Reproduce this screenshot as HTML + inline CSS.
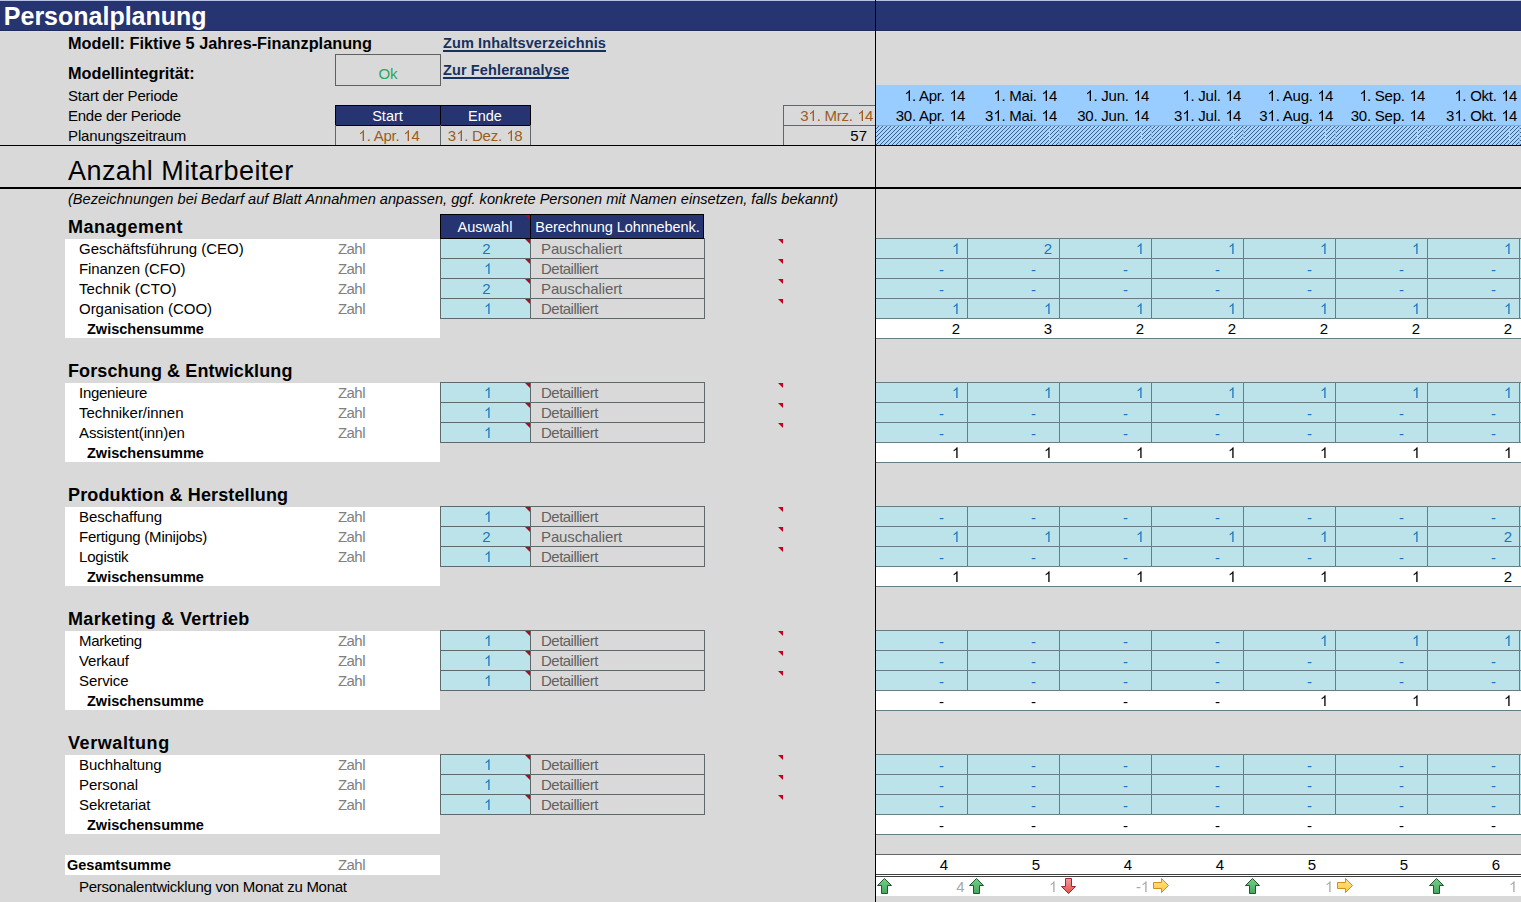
<!DOCTYPE html>
<html><head><meta charset="utf-8"><style>
html,body{margin:0;padding:0;}
body{width:1521px;height:902px;overflow:hidden;position:relative;background:#d9d9d9;font-family:"Liberation Sans",sans-serif;}
body>div{position:absolute;}
.t{white-space:nowrap;}
</style></head><body>
<div style="left:0px;top:0px;width:1521px;height:1px;background:#b8c2e6;"></div>
<div style="left:0px;top:1px;width:1521px;height:30px;background:#263471;"></div>
<div style="left:0px;top:30px;width:1521px;height:1px;background:#212c5a;"></div>
<div style="left:0px;top:31px;width:1521px;height:1px;background:#d9ddef;"></div>
<div class="t" style="left:3.8px;top:6.33px;font-size:25px;line-height:20px;font-weight:bold;color:#fff;font-style:normal;">Personalplanung</div>
<div class="t" style="left:68px;top:33.35px;font-size:16.3px;line-height:20px;font-weight:bold;color:#000;font-style:normal;">Modell: Fiktive 5 Jahres-Finanzplanung</div>
<div class="t" style="left:443px;top:32.97px;font-size:14.5px;line-height:20px;font-weight:bold;color:#17315f;font-style:normal;letter-spacing:0.12px;">Zum Inhaltsverzeichnis</div>
<div style="left:443px;top:50px;width:163px;height:2px;background:#17315f;"></div>
<div class="t" style="left:68px;top:63.35px;font-size:16.3px;line-height:20px;font-weight:bold;color:#000;font-style:normal;">Modellintegrit&auml;t:</div>
<div style="left:335px;top:54px;width:106px;height:32px;background:transparent;box-sizing:border-box;border:1px solid #606060;"></div>
<div class="t" style="left:335px;top:64.30px;font-size:15px;line-height:20px;font-weight:normal;color:#26a85e;font-style:normal;width:106px;text-align:center;">Ok</div>
<div class="t" style="left:443px;top:59.97px;font-size:14.5px;line-height:20px;font-weight:bold;color:#17315f;font-style:normal;letter-spacing:0.12px;">Zur Fehleranalyse</div>
<div style="left:443px;top:77px;width:126px;height:2px;background:#17315f;"></div>
<div class="t" style="left:68px;top:85.80px;font-size:15px;line-height:20px;font-weight:normal;color:#000;font-style:normal;letter-spacing:-0.210px;">Start der Periode</div>
<div class="t" style="left:68px;top:105.80px;font-size:15px;line-height:20px;font-weight:normal;color:#000;font-style:normal;letter-spacing:-0.250px;">Ende der Periode</div>
<div class="t" style="left:68px;top:125.80px;font-size:15px;line-height:20px;font-weight:normal;color:#000;font-style:normal;letter-spacing:-0.120px;">Planungszeitraum</div>
<div style="left:335px;top:105px;width:196px;height:21px;background:#263471;box-sizing:border-box;border:1px solid #000;"></div>
<div style="left:440px;top:105px;width:1px;height:20px;background:#000;"></div>
<div class="t" style="left:335px;top:105.97px;font-size:14.5px;line-height:20px;font-weight:normal;color:#fff;font-style:normal;width:105px;text-align:center;">Start</div>
<div class="t" style="left:440px;top:105.97px;font-size:14.5px;line-height:20px;font-weight:normal;color:#fff;font-style:normal;width:90px;text-align:center;">Ende</div>
<div style="left:335px;top:125px;width:1px;height:20px;background:#5f686a;"></div>
<div style="left:440px;top:125px;width:1px;height:20px;background:#5f686a;"></div>
<div style="left:530px;top:125px;width:1px;height:20px;background:#5f686a;"></div>
<div class="t" style="left:336.5px;top:125.80px;font-size:15px;line-height:20px;font-weight:normal;color:#9c5c22;font-style:normal;width:105px;text-align:center;letter-spacing:-0.25px;"><svg width="8.342" height="12" style="vertical-align:baseline"><path d="M763 0L583 0L583 1147Q518 1085 412 1023Q306 961 222 930L222 1104Q373 1175 486 1276Q599 1377 646 1472L763 1472Z" fill="#9c5c22" transform="translate(0.4,12) scale(0.007324,-0.007324)"/></svg>. Apr. <svg width="8.342" height="12" style="vertical-align:baseline"><path d="M763 0L583 0L583 1147Q518 1085 412 1023Q306 961 222 930L222 1104Q373 1175 486 1276Q599 1377 646 1472L763 1472Z" fill="#9c5c22" transform="translate(0.4,12) scale(0.007324,-0.007324)"/></svg>4</div>
<div class="t" style="left:440px;top:125.80px;font-size:15px;line-height:20px;font-weight:normal;color:#9c5c22;font-style:normal;width:90px;text-align:center;letter-spacing:-0.25px;">3<svg width="8.342" height="12" style="vertical-align:baseline"><path d="M763 0L583 0L583 1147Q518 1085 412 1023Q306 961 222 930L222 1104Q373 1175 486 1276Q599 1377 646 1472L763 1472Z" fill="#9c5c22" transform="translate(0.4,12) scale(0.007324,-0.007324)"/></svg>. Dez. <svg width="8.342" height="12" style="vertical-align:baseline"><path d="M763 0L583 0L583 1147Q518 1085 412 1023Q306 961 222 930L222 1104Q373 1175 486 1276Q599 1377 646 1472L763 1472Z" fill="#9c5c22" transform="translate(0.4,12) scale(0.007324,-0.007324)"/></svg>8</div>
<div style="left:783px;top:105px;width:92px;height:41px;background:transparent;box-sizing:border-box;border:1px solid #5f686a;border-right:none;"></div>
<div style="left:783px;top:125px;width:92px;height:1px;background:#5f686a;"></div>
<div class="t" style="left:573px;top:105.80px;font-size:15px;line-height:20px;font-weight:normal;color:#9c5c22;font-style:normal;width:300px;text-align:right;letter-spacing:-0.25px;">3<svg width="8.342" height="12" style="vertical-align:baseline"><path d="M763 0L583 0L583 1147Q518 1085 412 1023Q306 961 222 930L222 1104Q373 1175 486 1276Q599 1377 646 1472L763 1472Z" fill="#9c5c22" transform="translate(0.4,12) scale(0.007324,-0.007324)"/></svg>. Mrz. <svg width="8.342" height="12" style="vertical-align:baseline"><path d="M763 0L583 0L583 1147Q518 1085 412 1023Q306 961 222 930L222 1104Q373 1175 486 1276Q599 1377 646 1472L763 1472Z" fill="#9c5c22" transform="translate(0.4,12) scale(0.007324,-0.007324)"/></svg>4</div>
<div class="t" style="left:567px;top:125.80px;font-size:15px;line-height:20px;font-weight:normal;color:#000;font-style:normal;width:300px;text-align:right;">57</div>
<div style="left:876px;top:85px;width:645px;height:40px;background:#99ccff;"></div>
<svg style="position:absolute;left:876px;top:125px" width="645" height="20" shape-rendering="crispEdges"><defs><pattern id="hp" width="4" height="4" patternUnits="userSpaceOnUse"><rect width="4" height="4" fill="#a9d3fb"/><rect x="3" y="0" width="1" height="1" fill="#35618f"/><rect x="2" y="1" width="1" height="1" fill="#35618f"/><rect x="1" y="2" width="1" height="1" fill="#35618f"/><rect x="0" y="3" width="1" height="1" fill="#35618f"/></pattern></defs><rect width="645" height="20" fill="url(#hp)"/></svg>
<div style="left:876px;top:125px;width:645px;height:1px;background:#8fa8c0;"></div>
<div class="t" style="left:665px;top:85.80px;font-size:15px;line-height:20px;font-weight:normal;color:#000;font-style:normal;width:300px;text-align:right;letter-spacing:-0.25px;"><svg width="8.342" height="12" style="vertical-align:baseline"><path d="M763 0L583 0L583 1147Q518 1085 412 1023Q306 961 222 930L222 1104Q373 1175 486 1276Q599 1377 646 1472L763 1472Z" fill="#000" transform="translate(0.4,12) scale(0.007324,-0.007324)"/></svg>. Apr. <svg width="8.342" height="12" style="vertical-align:baseline"><path d="M763 0L583 0L583 1147Q518 1085 412 1023Q306 961 222 930L222 1104Q373 1175 486 1276Q599 1377 646 1472L763 1472Z" fill="#000" transform="translate(0.4,12) scale(0.007324,-0.007324)"/></svg>4</div>
<div class="t" style="left:665px;top:105.80px;font-size:15px;line-height:20px;font-weight:normal;color:#000;font-style:normal;width:300px;text-align:right;letter-spacing:-0.25px;">30. Apr. <svg width="8.342" height="12" style="vertical-align:baseline"><path d="M763 0L583 0L583 1147Q518 1085 412 1023Q306 961 222 930L222 1104Q373 1175 486 1276Q599 1377 646 1472L763 1472Z" fill="#000" transform="translate(0.4,12) scale(0.007324,-0.007324)"/></svg>4</div>
<div style="left:967px;top:126px;width:1px;height:19px;background:#a9b9c9;"></div>
<div class="t" style="left:757px;top:85.80px;font-size:15px;line-height:20px;font-weight:normal;color:#000;font-style:normal;width:300px;text-align:right;letter-spacing:-0.25px;"><svg width="8.342" height="12" style="vertical-align:baseline"><path d="M763 0L583 0L583 1147Q518 1085 412 1023Q306 961 222 930L222 1104Q373 1175 486 1276Q599 1377 646 1472L763 1472Z" fill="#000" transform="translate(0.4,12) scale(0.007324,-0.007324)"/></svg>. Mai. <svg width="8.342" height="12" style="vertical-align:baseline"><path d="M763 0L583 0L583 1147Q518 1085 412 1023Q306 961 222 930L222 1104Q373 1175 486 1276Q599 1377 646 1472L763 1472Z" fill="#000" transform="translate(0.4,12) scale(0.007324,-0.007324)"/></svg>4</div>
<div class="t" style="left:757px;top:105.80px;font-size:15px;line-height:20px;font-weight:normal;color:#000;font-style:normal;width:300px;text-align:right;letter-spacing:-0.25px;">3<svg width="8.342" height="12" style="vertical-align:baseline"><path d="M763 0L583 0L583 1147Q518 1085 412 1023Q306 961 222 930L222 1104Q373 1175 486 1276Q599 1377 646 1472L763 1472Z" fill="#000" transform="translate(0.4,12) scale(0.007324,-0.007324)"/></svg>. Mai. <svg width="8.342" height="12" style="vertical-align:baseline"><path d="M763 0L583 0L583 1147Q518 1085 412 1023Q306 961 222 930L222 1104Q373 1175 486 1276Q599 1377 646 1472L763 1472Z" fill="#000" transform="translate(0.4,12) scale(0.007324,-0.007324)"/></svg>4</div>
<div style="left:1059px;top:126px;width:1px;height:19px;background:#a9b9c9;"></div>
<div class="t" style="left:849px;top:85.80px;font-size:15px;line-height:20px;font-weight:normal;color:#000;font-style:normal;width:300px;text-align:right;letter-spacing:-0.25px;"><svg width="8.342" height="12" style="vertical-align:baseline"><path d="M763 0L583 0L583 1147Q518 1085 412 1023Q306 961 222 930L222 1104Q373 1175 486 1276Q599 1377 646 1472L763 1472Z" fill="#000" transform="translate(0.4,12) scale(0.007324,-0.007324)"/></svg>. Jun. <svg width="8.342" height="12" style="vertical-align:baseline"><path d="M763 0L583 0L583 1147Q518 1085 412 1023Q306 961 222 930L222 1104Q373 1175 486 1276Q599 1377 646 1472L763 1472Z" fill="#000" transform="translate(0.4,12) scale(0.007324,-0.007324)"/></svg>4</div>
<div class="t" style="left:849px;top:105.80px;font-size:15px;line-height:20px;font-weight:normal;color:#000;font-style:normal;width:300px;text-align:right;letter-spacing:-0.25px;">30. Jun. <svg width="8.342" height="12" style="vertical-align:baseline"><path d="M763 0L583 0L583 1147Q518 1085 412 1023Q306 961 222 930L222 1104Q373 1175 486 1276Q599 1377 646 1472L763 1472Z" fill="#000" transform="translate(0.4,12) scale(0.007324,-0.007324)"/></svg>4</div>
<div style="left:1151px;top:126px;width:1px;height:19px;background:#a9b9c9;"></div>
<div class="t" style="left:941px;top:85.80px;font-size:15px;line-height:20px;font-weight:normal;color:#000;font-style:normal;width:300px;text-align:right;letter-spacing:-0.25px;"><svg width="8.342" height="12" style="vertical-align:baseline"><path d="M763 0L583 0L583 1147Q518 1085 412 1023Q306 961 222 930L222 1104Q373 1175 486 1276Q599 1377 646 1472L763 1472Z" fill="#000" transform="translate(0.4,12) scale(0.007324,-0.007324)"/></svg>. Jul. <svg width="8.342" height="12" style="vertical-align:baseline"><path d="M763 0L583 0L583 1147Q518 1085 412 1023Q306 961 222 930L222 1104Q373 1175 486 1276Q599 1377 646 1472L763 1472Z" fill="#000" transform="translate(0.4,12) scale(0.007324,-0.007324)"/></svg>4</div>
<div class="t" style="left:941px;top:105.80px;font-size:15px;line-height:20px;font-weight:normal;color:#000;font-style:normal;width:300px;text-align:right;letter-spacing:-0.25px;">3<svg width="8.342" height="12" style="vertical-align:baseline"><path d="M763 0L583 0L583 1147Q518 1085 412 1023Q306 961 222 930L222 1104Q373 1175 486 1276Q599 1377 646 1472L763 1472Z" fill="#000" transform="translate(0.4,12) scale(0.007324,-0.007324)"/></svg>. Jul. <svg width="8.342" height="12" style="vertical-align:baseline"><path d="M763 0L583 0L583 1147Q518 1085 412 1023Q306 961 222 930L222 1104Q373 1175 486 1276Q599 1377 646 1472L763 1472Z" fill="#000" transform="translate(0.4,12) scale(0.007324,-0.007324)"/></svg>4</div>
<div style="left:1243px;top:126px;width:1px;height:19px;background:#a9b9c9;"></div>
<div class="t" style="left:1033px;top:85.80px;font-size:15px;line-height:20px;font-weight:normal;color:#000;font-style:normal;width:300px;text-align:right;letter-spacing:-0.25px;"><svg width="8.342" height="12" style="vertical-align:baseline"><path d="M763 0L583 0L583 1147Q518 1085 412 1023Q306 961 222 930L222 1104Q373 1175 486 1276Q599 1377 646 1472L763 1472Z" fill="#000" transform="translate(0.4,12) scale(0.007324,-0.007324)"/></svg>. Aug. <svg width="8.342" height="12" style="vertical-align:baseline"><path d="M763 0L583 0L583 1147Q518 1085 412 1023Q306 961 222 930L222 1104Q373 1175 486 1276Q599 1377 646 1472L763 1472Z" fill="#000" transform="translate(0.4,12) scale(0.007324,-0.007324)"/></svg>4</div>
<div class="t" style="left:1033px;top:105.80px;font-size:15px;line-height:20px;font-weight:normal;color:#000;font-style:normal;width:300px;text-align:right;letter-spacing:-0.25px;">3<svg width="8.342" height="12" style="vertical-align:baseline"><path d="M763 0L583 0L583 1147Q518 1085 412 1023Q306 961 222 930L222 1104Q373 1175 486 1276Q599 1377 646 1472L763 1472Z" fill="#000" transform="translate(0.4,12) scale(0.007324,-0.007324)"/></svg>. Aug. <svg width="8.342" height="12" style="vertical-align:baseline"><path d="M763 0L583 0L583 1147Q518 1085 412 1023Q306 961 222 930L222 1104Q373 1175 486 1276Q599 1377 646 1472L763 1472Z" fill="#000" transform="translate(0.4,12) scale(0.007324,-0.007324)"/></svg>4</div>
<div style="left:1335px;top:126px;width:1px;height:19px;background:#a9b9c9;"></div>
<div class="t" style="left:1125px;top:85.80px;font-size:15px;line-height:20px;font-weight:normal;color:#000;font-style:normal;width:300px;text-align:right;letter-spacing:-0.25px;"><svg width="8.342" height="12" style="vertical-align:baseline"><path d="M763 0L583 0L583 1147Q518 1085 412 1023Q306 961 222 930L222 1104Q373 1175 486 1276Q599 1377 646 1472L763 1472Z" fill="#000" transform="translate(0.4,12) scale(0.007324,-0.007324)"/></svg>. Sep. <svg width="8.342" height="12" style="vertical-align:baseline"><path d="M763 0L583 0L583 1147Q518 1085 412 1023Q306 961 222 930L222 1104Q373 1175 486 1276Q599 1377 646 1472L763 1472Z" fill="#000" transform="translate(0.4,12) scale(0.007324,-0.007324)"/></svg>4</div>
<div class="t" style="left:1125px;top:105.80px;font-size:15px;line-height:20px;font-weight:normal;color:#000;font-style:normal;width:300px;text-align:right;letter-spacing:-0.25px;">30. Sep. <svg width="8.342" height="12" style="vertical-align:baseline"><path d="M763 0L583 0L583 1147Q518 1085 412 1023Q306 961 222 930L222 1104Q373 1175 486 1276Q599 1377 646 1472L763 1472Z" fill="#000" transform="translate(0.4,12) scale(0.007324,-0.007324)"/></svg>4</div>
<div style="left:1427px;top:126px;width:1px;height:19px;background:#a9b9c9;"></div>
<div class="t" style="left:1217px;top:85.80px;font-size:15px;line-height:20px;font-weight:normal;color:#000;font-style:normal;width:300px;text-align:right;letter-spacing:-0.25px;"><svg width="8.342" height="12" style="vertical-align:baseline"><path d="M763 0L583 0L583 1147Q518 1085 412 1023Q306 961 222 930L222 1104Q373 1175 486 1276Q599 1377 646 1472L763 1472Z" fill="#000" transform="translate(0.4,12) scale(0.007324,-0.007324)"/></svg>. Okt. <svg width="8.342" height="12" style="vertical-align:baseline"><path d="M763 0L583 0L583 1147Q518 1085 412 1023Q306 961 222 930L222 1104Q373 1175 486 1276Q599 1377 646 1472L763 1472Z" fill="#000" transform="translate(0.4,12) scale(0.007324,-0.007324)"/></svg>4</div>
<div class="t" style="left:1217px;top:105.80px;font-size:15px;line-height:20px;font-weight:normal;color:#000;font-style:normal;width:300px;text-align:right;letter-spacing:-0.25px;">3<svg width="8.342" height="12" style="vertical-align:baseline"><path d="M763 0L583 0L583 1147Q518 1085 412 1023Q306 961 222 930L222 1104Q373 1175 486 1276Q599 1377 646 1472L763 1472Z" fill="#000" transform="translate(0.4,12) scale(0.007324,-0.007324)"/></svg>. Okt. <svg width="8.342" height="12" style="vertical-align:baseline"><path d="M763 0L583 0L583 1147Q518 1085 412 1023Q306 961 222 930L222 1104Q373 1175 486 1276Q599 1377 646 1472L763 1472Z" fill="#000" transform="translate(0.4,12) scale(0.007324,-0.007324)"/></svg>4</div>
<div style="left:1519px;top:126px;width:1px;height:19px;background:#a9b9c9;"></div>
<div style="left:957px;top:130px;width:1px;height:13px;background:#c6cff2;"></div>
<div style="left:1049px;top:130px;width:1px;height:13px;background:#c6cff2;"></div>
<div style="left:1141px;top:130px;width:1px;height:13px;background:#c6cff2;"></div>
<div style="left:1233px;top:130px;width:1px;height:13px;background:#c6cff2;"></div>
<div style="left:1325px;top:130px;width:1px;height:13px;background:#c6cff2;"></div>
<div style="left:1417px;top:130px;width:1px;height:13px;background:#c6cff2;"></div>
<div style="left:1509px;top:130px;width:1px;height:13px;background:#c6cff2;"></div>
<div style="left:0px;top:145px;width:1521px;height:1px;background:#000;"></div>
<div class="t" style="left:68px;top:160.64px;font-size:27px;line-height:20px;font-weight:normal;color:#000;font-style:normal;letter-spacing:0.45px;">Anzahl Mitarbeiter</div>
<div style="left:0px;top:187px;width:1521px;height:2px;background:#000;"></div>
<div class="t" style="left:68px;top:188.94px;font-size:14.6px;line-height:20px;font-weight:normal;color:#000;font-style:italic;">(Bezeichnungen bei Bedarf auf Blatt Annahmen anpassen, ggf. konkrete Personen mit Namen einsetzen, falls bekannt)</div>
<div style="left:875px;top:0px;width:1px;height:902px;background:#000;"></div>
<div style="left:525px;top:215px;width:0;height:0;border-top:5px solid #c4001c;border-left:5px solid transparent;"></div>
<div class="t" style="left:68px;top:216.76px;font-size:18px;line-height:20px;font-weight:bold;color:#000;font-style:normal;letter-spacing:0.5px;">Management</div>
<div style="left:65px;top:239px;width:375px;height:99px;background:#fff;"></div>
<div style="left:440px;top:239px;width:90px;height:80px;background:#bde3ea;"></div>
<div style="left:440px;top:238px;width:265px;height:1px;background:#5f686a;"></div>
<div style="left:440px;top:258px;width:265px;height:1px;background:#5f686a;"></div>
<div style="left:440px;top:278px;width:265px;height:1px;background:#5f686a;"></div>
<div style="left:440px;top:298px;width:265px;height:1px;background:#5f686a;"></div>
<div style="left:440px;top:318px;width:265px;height:1px;background:#5f686a;"></div>
<div style="left:440px;top:238px;width:1px;height:81px;background:#5f686a;"></div>
<div style="left:530px;top:238px;width:1px;height:81px;background:#5f686a;"></div>
<div style="left:704px;top:238px;width:1px;height:81px;background:#5f686a;"></div>
<div style="left:876px;top:239px;width:645px;height:80px;background:#bde3ea;"></div>
<div style="left:876px;top:319px;width:645px;height:19px;background:#fff;"></div>
<div style="left:876px;top:238px;width:645px;height:1px;background:#667d83;"></div>
<div style="left:876px;top:258px;width:645px;height:1px;background:#667d83;"></div>
<div style="left:876px;top:278px;width:645px;height:1px;background:#667d83;"></div>
<div style="left:876px;top:298px;width:645px;height:1px;background:#667d83;"></div>
<div style="left:876px;top:318px;width:645px;height:1px;background:#667d83;"></div>
<div style="left:876px;top:338px;width:645px;height:1px;background:#667d83;"></div>
<div style="left:967px;top:238px;width:1px;height:81px;background:#667d83;"></div>
<div style="left:1059px;top:238px;width:1px;height:81px;background:#667d83;"></div>
<div style="left:1151px;top:238px;width:1px;height:81px;background:#667d83;"></div>
<div style="left:1243px;top:238px;width:1px;height:81px;background:#667d83;"></div>
<div style="left:1335px;top:238px;width:1px;height:81px;background:#667d83;"></div>
<div style="left:1427px;top:238px;width:1px;height:81px;background:#667d83;"></div>
<div style="left:1519px;top:238px;width:1px;height:81px;background:#667d83;"></div>
<div class="t" style="left:79px;top:238.80px;font-size:15px;line-height:20px;font-weight:normal;color:#000;font-style:normal;letter-spacing:-0.020px;">Gesch&auml;ftsf&uuml;hrung (CEO)</div>
<div class="t" style="left:338px;top:238.80px;font-size:15px;line-height:20px;font-weight:normal;color:#808080;font-style:normal;letter-spacing:-0.570px;">Zahl</div>
<div class="t" style="left:441.5px;top:238.80px;font-size:15px;line-height:20px;font-weight:normal;color:#1c75bc;font-style:normal;width:90px;text-align:center;">2</div>
<div class="t" style="left:541px;top:238.80px;font-size:15px;line-height:20px;font-weight:normal;color:#626262;font-style:normal;letter-spacing:-0.120px;">Pauschaliert</div>
<div style="left:525px;top:239px;width:0;height:0;border-top:5px solid #c4001c;border-left:5px solid transparent;"></div>
<div style="left:778px;top:239px;width:0;height:0;border-top:5px solid #c4001c;border-left:5px solid transparent;"></div>
<svg style="position:absolute;left:952.46px;top:241px" width="10" height="16"><path d="M763 0L583 0L583 1147Q518 1085 412 1023Q306 961 222 930L222 1104Q373 1175 486 1276Q599 1377 646 1472L763 1472Z" fill="#1c75bc" transform="translate(0,13) scale(0.007324,-0.007324)"/></svg>
<div class="t" style="left:752px;top:238.80px;font-size:15px;line-height:20px;font-weight:normal;color:#1c75bc;font-style:normal;width:300px;text-align:right;">2</div>
<svg style="position:absolute;left:1136.46px;top:241px" width="10" height="16"><path d="M763 0L583 0L583 1147Q518 1085 412 1023Q306 961 222 930L222 1104Q373 1175 486 1276Q599 1377 646 1472L763 1472Z" fill="#1c75bc" transform="translate(0,13) scale(0.007324,-0.007324)"/></svg>
<svg style="position:absolute;left:1228.46px;top:241px" width="10" height="16"><path d="M763 0L583 0L583 1147Q518 1085 412 1023Q306 961 222 930L222 1104Q373 1175 486 1276Q599 1377 646 1472L763 1472Z" fill="#1c75bc" transform="translate(0,13) scale(0.007324,-0.007324)"/></svg>
<svg style="position:absolute;left:1320.46px;top:241px" width="10" height="16"><path d="M763 0L583 0L583 1147Q518 1085 412 1023Q306 961 222 930L222 1104Q373 1175 486 1276Q599 1377 646 1472L763 1472Z" fill="#1c75bc" transform="translate(0,13) scale(0.007324,-0.007324)"/></svg>
<svg style="position:absolute;left:1412.46px;top:241px" width="10" height="16"><path d="M763 0L583 0L583 1147Q518 1085 412 1023Q306 961 222 930L222 1104Q373 1175 486 1276Q599 1377 646 1472L763 1472Z" fill="#1c75bc" transform="translate(0,13) scale(0.007324,-0.007324)"/></svg>
<svg style="position:absolute;left:1504.46px;top:241px" width="10" height="16"><path d="M763 0L583 0L583 1147Q518 1085 412 1023Q306 961 222 930L222 1104Q373 1175 486 1276Q599 1377 646 1472L763 1472Z" fill="#1c75bc" transform="translate(0,13) scale(0.007324,-0.007324)"/></svg>
<div class="t" style="left:79px;top:258.80px;font-size:15px;line-height:20px;font-weight:normal;color:#000;font-style:normal;letter-spacing:-0.080px;">Finanzen (CFO)</div>
<div class="t" style="left:338px;top:258.80px;font-size:15px;line-height:20px;font-weight:normal;color:#808080;font-style:normal;letter-spacing:-0.570px;">Zahl</div>
<svg style="position:absolute;left:483.83px;top:261px" width="10" height="16"><path d="M763 0L583 0L583 1147Q518 1085 412 1023Q306 961 222 930L222 1104Q373 1175 486 1276Q599 1377 646 1472L763 1472Z" fill="#1c75bc" transform="translate(0,13) scale(0.007324,-0.007324)"/></svg>
<div class="t" style="left:541px;top:258.80px;font-size:15px;line-height:20px;font-weight:normal;color:#626262;font-style:normal;letter-spacing:-0.520px;">Detailliert</div>
<div style="left:525px;top:259px;width:0;height:0;border-top:5px solid #c4001c;border-left:5px solid transparent;"></div>
<div style="left:778px;top:259px;width:0;height:0;border-top:5px solid #c4001c;border-left:5px solid transparent;"></div>
<div class="t" style="left:644px;top:259.80px;font-size:15px;line-height:20px;font-weight:normal;color:#1c75bc;font-style:normal;width:300px;text-align:right;">-</div>
<div class="t" style="left:736px;top:259.80px;font-size:15px;line-height:20px;font-weight:normal;color:#1c75bc;font-style:normal;width:300px;text-align:right;">-</div>
<div class="t" style="left:828px;top:259.80px;font-size:15px;line-height:20px;font-weight:normal;color:#1c75bc;font-style:normal;width:300px;text-align:right;">-</div>
<div class="t" style="left:920px;top:259.80px;font-size:15px;line-height:20px;font-weight:normal;color:#1c75bc;font-style:normal;width:300px;text-align:right;">-</div>
<div class="t" style="left:1012px;top:259.80px;font-size:15px;line-height:20px;font-weight:normal;color:#1c75bc;font-style:normal;width:300px;text-align:right;">-</div>
<div class="t" style="left:1104px;top:259.80px;font-size:15px;line-height:20px;font-weight:normal;color:#1c75bc;font-style:normal;width:300px;text-align:right;">-</div>
<div class="t" style="left:1196px;top:259.80px;font-size:15px;line-height:20px;font-weight:normal;color:#1c75bc;font-style:normal;width:300px;text-align:right;">-</div>
<div class="t" style="left:79px;top:278.80px;font-size:15px;line-height:20px;font-weight:normal;color:#000;font-style:normal;letter-spacing:0.090px;">Technik (CTO)</div>
<div class="t" style="left:338px;top:278.80px;font-size:15px;line-height:20px;font-weight:normal;color:#808080;font-style:normal;letter-spacing:-0.570px;">Zahl</div>
<div class="t" style="left:441.5px;top:278.80px;font-size:15px;line-height:20px;font-weight:normal;color:#1c75bc;font-style:normal;width:90px;text-align:center;">2</div>
<div class="t" style="left:541px;top:278.80px;font-size:15px;line-height:20px;font-weight:normal;color:#626262;font-style:normal;letter-spacing:-0.120px;">Pauschaliert</div>
<div style="left:525px;top:279px;width:0;height:0;border-top:5px solid #c4001c;border-left:5px solid transparent;"></div>
<div style="left:778px;top:279px;width:0;height:0;border-top:5px solid #c4001c;border-left:5px solid transparent;"></div>
<div class="t" style="left:644px;top:279.80px;font-size:15px;line-height:20px;font-weight:normal;color:#1c75bc;font-style:normal;width:300px;text-align:right;">-</div>
<div class="t" style="left:736px;top:279.80px;font-size:15px;line-height:20px;font-weight:normal;color:#1c75bc;font-style:normal;width:300px;text-align:right;">-</div>
<div class="t" style="left:828px;top:279.80px;font-size:15px;line-height:20px;font-weight:normal;color:#1c75bc;font-style:normal;width:300px;text-align:right;">-</div>
<div class="t" style="left:920px;top:279.80px;font-size:15px;line-height:20px;font-weight:normal;color:#1c75bc;font-style:normal;width:300px;text-align:right;">-</div>
<div class="t" style="left:1012px;top:279.80px;font-size:15px;line-height:20px;font-weight:normal;color:#1c75bc;font-style:normal;width:300px;text-align:right;">-</div>
<div class="t" style="left:1104px;top:279.80px;font-size:15px;line-height:20px;font-weight:normal;color:#1c75bc;font-style:normal;width:300px;text-align:right;">-</div>
<div class="t" style="left:1196px;top:279.80px;font-size:15px;line-height:20px;font-weight:normal;color:#1c75bc;font-style:normal;width:300px;text-align:right;">-</div>
<div class="t" style="left:79px;top:298.80px;font-size:15px;line-height:20px;font-weight:normal;color:#000;font-style:normal;letter-spacing:-0.020px;">Organisation (COO)</div>
<div class="t" style="left:338px;top:298.80px;font-size:15px;line-height:20px;font-weight:normal;color:#808080;font-style:normal;letter-spacing:-0.570px;">Zahl</div>
<svg style="position:absolute;left:483.83px;top:301px" width="10" height="16"><path d="M763 0L583 0L583 1147Q518 1085 412 1023Q306 961 222 930L222 1104Q373 1175 486 1276Q599 1377 646 1472L763 1472Z" fill="#1c75bc" transform="translate(0,13) scale(0.007324,-0.007324)"/></svg>
<div class="t" style="left:541px;top:298.80px;font-size:15px;line-height:20px;font-weight:normal;color:#626262;font-style:normal;letter-spacing:-0.520px;">Detailliert</div>
<div style="left:525px;top:299px;width:0;height:0;border-top:5px solid #c4001c;border-left:5px solid transparent;"></div>
<div style="left:778px;top:299px;width:0;height:0;border-top:5px solid #c4001c;border-left:5px solid transparent;"></div>
<svg style="position:absolute;left:952.46px;top:301px" width="10" height="16"><path d="M763 0L583 0L583 1147Q518 1085 412 1023Q306 961 222 930L222 1104Q373 1175 486 1276Q599 1377 646 1472L763 1472Z" fill="#1c75bc" transform="translate(0,13) scale(0.007324,-0.007324)"/></svg>
<svg style="position:absolute;left:1044.46px;top:301px" width="10" height="16"><path d="M763 0L583 0L583 1147Q518 1085 412 1023Q306 961 222 930L222 1104Q373 1175 486 1276Q599 1377 646 1472L763 1472Z" fill="#1c75bc" transform="translate(0,13) scale(0.007324,-0.007324)"/></svg>
<svg style="position:absolute;left:1136.46px;top:301px" width="10" height="16"><path d="M763 0L583 0L583 1147Q518 1085 412 1023Q306 961 222 930L222 1104Q373 1175 486 1276Q599 1377 646 1472L763 1472Z" fill="#1c75bc" transform="translate(0,13) scale(0.007324,-0.007324)"/></svg>
<svg style="position:absolute;left:1228.46px;top:301px" width="10" height="16"><path d="M763 0L583 0L583 1147Q518 1085 412 1023Q306 961 222 930L222 1104Q373 1175 486 1276Q599 1377 646 1472L763 1472Z" fill="#1c75bc" transform="translate(0,13) scale(0.007324,-0.007324)"/></svg>
<svg style="position:absolute;left:1320.46px;top:301px" width="10" height="16"><path d="M763 0L583 0L583 1147Q518 1085 412 1023Q306 961 222 930L222 1104Q373 1175 486 1276Q599 1377 646 1472L763 1472Z" fill="#1c75bc" transform="translate(0,13) scale(0.007324,-0.007324)"/></svg>
<svg style="position:absolute;left:1412.46px;top:301px" width="10" height="16"><path d="M763 0L583 0L583 1147Q518 1085 412 1023Q306 961 222 930L222 1104Q373 1175 486 1276Q599 1377 646 1472L763 1472Z" fill="#1c75bc" transform="translate(0,13) scale(0.007324,-0.007324)"/></svg>
<svg style="position:absolute;left:1504.46px;top:301px" width="10" height="16"><path d="M763 0L583 0L583 1147Q518 1085 412 1023Q306 961 222 930L222 1104Q373 1175 486 1276Q599 1377 646 1472L763 1472Z" fill="#1c75bc" transform="translate(0,13) scale(0.007324,-0.007324)"/></svg>
<div class="t" style="left:87px;top:318.97px;font-size:14.5px;line-height:20px;font-weight:bold;color:#000;font-style:normal;">Zwischensumme</div>
<div class="t" style="left:660px;top:318.80px;font-size:15px;line-height:20px;font-weight:normal;color:#000;font-style:normal;width:300px;text-align:right;">2</div>
<div class="t" style="left:752px;top:318.80px;font-size:15px;line-height:20px;font-weight:normal;color:#000;font-style:normal;width:300px;text-align:right;">3</div>
<div class="t" style="left:844px;top:318.80px;font-size:15px;line-height:20px;font-weight:normal;color:#000;font-style:normal;width:300px;text-align:right;">2</div>
<div class="t" style="left:936px;top:318.80px;font-size:15px;line-height:20px;font-weight:normal;color:#000;font-style:normal;width:300px;text-align:right;">2</div>
<div class="t" style="left:1028px;top:318.80px;font-size:15px;line-height:20px;font-weight:normal;color:#000;font-style:normal;width:300px;text-align:right;">2</div>
<div class="t" style="left:1120px;top:318.80px;font-size:15px;line-height:20px;font-weight:normal;color:#000;font-style:normal;width:300px;text-align:right;">2</div>
<div class="t" style="left:1212px;top:318.80px;font-size:15px;line-height:20px;font-weight:normal;color:#000;font-style:normal;width:300px;text-align:right;">2</div>
<div class="t" style="left:68px;top:360.76px;font-size:18px;line-height:20px;font-weight:bold;color:#000;font-style:normal;letter-spacing:0.11px;">Forschung &amp; Entwicklung</div>
<div style="left:65px;top:383px;width:375px;height:79px;background:#fff;"></div>
<div style="left:440px;top:383px;width:90px;height:60px;background:#bde3ea;"></div>
<div style="left:440px;top:382px;width:265px;height:1px;background:#5f686a;"></div>
<div style="left:440px;top:402px;width:265px;height:1px;background:#5f686a;"></div>
<div style="left:440px;top:422px;width:265px;height:1px;background:#5f686a;"></div>
<div style="left:440px;top:442px;width:265px;height:1px;background:#5f686a;"></div>
<div style="left:440px;top:382px;width:1px;height:61px;background:#5f686a;"></div>
<div style="left:530px;top:382px;width:1px;height:61px;background:#5f686a;"></div>
<div style="left:704px;top:382px;width:1px;height:61px;background:#5f686a;"></div>
<div style="left:876px;top:383px;width:645px;height:60px;background:#bde3ea;"></div>
<div style="left:876px;top:443px;width:645px;height:19px;background:#fff;"></div>
<div style="left:876px;top:382px;width:645px;height:1px;background:#667d83;"></div>
<div style="left:876px;top:402px;width:645px;height:1px;background:#667d83;"></div>
<div style="left:876px;top:422px;width:645px;height:1px;background:#667d83;"></div>
<div style="left:876px;top:442px;width:645px;height:1px;background:#667d83;"></div>
<div style="left:876px;top:462px;width:645px;height:1px;background:#667d83;"></div>
<div style="left:967px;top:382px;width:1px;height:61px;background:#667d83;"></div>
<div style="left:1059px;top:382px;width:1px;height:61px;background:#667d83;"></div>
<div style="left:1151px;top:382px;width:1px;height:61px;background:#667d83;"></div>
<div style="left:1243px;top:382px;width:1px;height:61px;background:#667d83;"></div>
<div style="left:1335px;top:382px;width:1px;height:61px;background:#667d83;"></div>
<div style="left:1427px;top:382px;width:1px;height:61px;background:#667d83;"></div>
<div style="left:1519px;top:382px;width:1px;height:61px;background:#667d83;"></div>
<div class="t" style="left:79px;top:382.80px;font-size:15px;line-height:20px;font-weight:normal;color:#000;font-style:normal;letter-spacing:-0.270px;">Ingenieure</div>
<div class="t" style="left:338px;top:382.80px;font-size:15px;line-height:20px;font-weight:normal;color:#808080;font-style:normal;letter-spacing:-0.570px;">Zahl</div>
<svg style="position:absolute;left:483.83px;top:385px" width="10" height="16"><path d="M763 0L583 0L583 1147Q518 1085 412 1023Q306 961 222 930L222 1104Q373 1175 486 1276Q599 1377 646 1472L763 1472Z" fill="#1c75bc" transform="translate(0,13) scale(0.007324,-0.007324)"/></svg>
<div class="t" style="left:541px;top:382.80px;font-size:15px;line-height:20px;font-weight:normal;color:#626262;font-style:normal;letter-spacing:-0.520px;">Detailliert</div>
<div style="left:525px;top:383px;width:0;height:0;border-top:5px solid #c4001c;border-left:5px solid transparent;"></div>
<div style="left:778px;top:383px;width:0;height:0;border-top:5px solid #c4001c;border-left:5px solid transparent;"></div>
<svg style="position:absolute;left:952.46px;top:385px" width="10" height="16"><path d="M763 0L583 0L583 1147Q518 1085 412 1023Q306 961 222 930L222 1104Q373 1175 486 1276Q599 1377 646 1472L763 1472Z" fill="#1c75bc" transform="translate(0,13) scale(0.007324,-0.007324)"/></svg>
<svg style="position:absolute;left:1044.46px;top:385px" width="10" height="16"><path d="M763 0L583 0L583 1147Q518 1085 412 1023Q306 961 222 930L222 1104Q373 1175 486 1276Q599 1377 646 1472L763 1472Z" fill="#1c75bc" transform="translate(0,13) scale(0.007324,-0.007324)"/></svg>
<svg style="position:absolute;left:1136.46px;top:385px" width="10" height="16"><path d="M763 0L583 0L583 1147Q518 1085 412 1023Q306 961 222 930L222 1104Q373 1175 486 1276Q599 1377 646 1472L763 1472Z" fill="#1c75bc" transform="translate(0,13) scale(0.007324,-0.007324)"/></svg>
<svg style="position:absolute;left:1228.46px;top:385px" width="10" height="16"><path d="M763 0L583 0L583 1147Q518 1085 412 1023Q306 961 222 930L222 1104Q373 1175 486 1276Q599 1377 646 1472L763 1472Z" fill="#1c75bc" transform="translate(0,13) scale(0.007324,-0.007324)"/></svg>
<svg style="position:absolute;left:1320.46px;top:385px" width="10" height="16"><path d="M763 0L583 0L583 1147Q518 1085 412 1023Q306 961 222 930L222 1104Q373 1175 486 1276Q599 1377 646 1472L763 1472Z" fill="#1c75bc" transform="translate(0,13) scale(0.007324,-0.007324)"/></svg>
<svg style="position:absolute;left:1412.46px;top:385px" width="10" height="16"><path d="M763 0L583 0L583 1147Q518 1085 412 1023Q306 961 222 930L222 1104Q373 1175 486 1276Q599 1377 646 1472L763 1472Z" fill="#1c75bc" transform="translate(0,13) scale(0.007324,-0.007324)"/></svg>
<svg style="position:absolute;left:1504.46px;top:385px" width="10" height="16"><path d="M763 0L583 0L583 1147Q518 1085 412 1023Q306 961 222 930L222 1104Q373 1175 486 1276Q599 1377 646 1472L763 1472Z" fill="#1c75bc" transform="translate(0,13) scale(0.007324,-0.007324)"/></svg>
<div class="t" style="left:79px;top:402.80px;font-size:15px;line-height:20px;font-weight:normal;color:#000;font-style:normal;letter-spacing:-0.040px;">Techniker/innen</div>
<div class="t" style="left:338px;top:402.80px;font-size:15px;line-height:20px;font-weight:normal;color:#808080;font-style:normal;letter-spacing:-0.570px;">Zahl</div>
<svg style="position:absolute;left:483.83px;top:405px" width="10" height="16"><path d="M763 0L583 0L583 1147Q518 1085 412 1023Q306 961 222 930L222 1104Q373 1175 486 1276Q599 1377 646 1472L763 1472Z" fill="#1c75bc" transform="translate(0,13) scale(0.007324,-0.007324)"/></svg>
<div class="t" style="left:541px;top:402.80px;font-size:15px;line-height:20px;font-weight:normal;color:#626262;font-style:normal;letter-spacing:-0.520px;">Detailliert</div>
<div style="left:525px;top:403px;width:0;height:0;border-top:5px solid #c4001c;border-left:5px solid transparent;"></div>
<div style="left:778px;top:403px;width:0;height:0;border-top:5px solid #c4001c;border-left:5px solid transparent;"></div>
<div class="t" style="left:644px;top:403.80px;font-size:15px;line-height:20px;font-weight:normal;color:#1c75bc;font-style:normal;width:300px;text-align:right;">-</div>
<div class="t" style="left:736px;top:403.80px;font-size:15px;line-height:20px;font-weight:normal;color:#1c75bc;font-style:normal;width:300px;text-align:right;">-</div>
<div class="t" style="left:828px;top:403.80px;font-size:15px;line-height:20px;font-weight:normal;color:#1c75bc;font-style:normal;width:300px;text-align:right;">-</div>
<div class="t" style="left:920px;top:403.80px;font-size:15px;line-height:20px;font-weight:normal;color:#1c75bc;font-style:normal;width:300px;text-align:right;">-</div>
<div class="t" style="left:1012px;top:403.80px;font-size:15px;line-height:20px;font-weight:normal;color:#1c75bc;font-style:normal;width:300px;text-align:right;">-</div>
<div class="t" style="left:1104px;top:403.80px;font-size:15px;line-height:20px;font-weight:normal;color:#1c75bc;font-style:normal;width:300px;text-align:right;">-</div>
<div class="t" style="left:1196px;top:403.80px;font-size:15px;line-height:20px;font-weight:normal;color:#1c75bc;font-style:normal;width:300px;text-align:right;">-</div>
<div class="t" style="left:79px;top:422.80px;font-size:15px;line-height:20px;font-weight:normal;color:#000;font-style:normal;letter-spacing:-0.120px;">Assistent(inn)en</div>
<div class="t" style="left:338px;top:422.80px;font-size:15px;line-height:20px;font-weight:normal;color:#808080;font-style:normal;letter-spacing:-0.570px;">Zahl</div>
<svg style="position:absolute;left:483.83px;top:425px" width="10" height="16"><path d="M763 0L583 0L583 1147Q518 1085 412 1023Q306 961 222 930L222 1104Q373 1175 486 1276Q599 1377 646 1472L763 1472Z" fill="#1c75bc" transform="translate(0,13) scale(0.007324,-0.007324)"/></svg>
<div class="t" style="left:541px;top:422.80px;font-size:15px;line-height:20px;font-weight:normal;color:#626262;font-style:normal;letter-spacing:-0.520px;">Detailliert</div>
<div style="left:525px;top:423px;width:0;height:0;border-top:5px solid #c4001c;border-left:5px solid transparent;"></div>
<div style="left:778px;top:423px;width:0;height:0;border-top:5px solid #c4001c;border-left:5px solid transparent;"></div>
<div class="t" style="left:644px;top:423.80px;font-size:15px;line-height:20px;font-weight:normal;color:#1c75bc;font-style:normal;width:300px;text-align:right;">-</div>
<div class="t" style="left:736px;top:423.80px;font-size:15px;line-height:20px;font-weight:normal;color:#1c75bc;font-style:normal;width:300px;text-align:right;">-</div>
<div class="t" style="left:828px;top:423.80px;font-size:15px;line-height:20px;font-weight:normal;color:#1c75bc;font-style:normal;width:300px;text-align:right;">-</div>
<div class="t" style="left:920px;top:423.80px;font-size:15px;line-height:20px;font-weight:normal;color:#1c75bc;font-style:normal;width:300px;text-align:right;">-</div>
<div class="t" style="left:1012px;top:423.80px;font-size:15px;line-height:20px;font-weight:normal;color:#1c75bc;font-style:normal;width:300px;text-align:right;">-</div>
<div class="t" style="left:1104px;top:423.80px;font-size:15px;line-height:20px;font-weight:normal;color:#1c75bc;font-style:normal;width:300px;text-align:right;">-</div>
<div class="t" style="left:1196px;top:423.80px;font-size:15px;line-height:20px;font-weight:normal;color:#1c75bc;font-style:normal;width:300px;text-align:right;">-</div>
<div class="t" style="left:87px;top:442.97px;font-size:14.5px;line-height:20px;font-weight:bold;color:#000;font-style:normal;">Zwischensumme</div>
<svg style="position:absolute;left:952.46px;top:445px" width="10" height="16"><path d="M763 0L583 0L583 1147Q518 1085 412 1023Q306 961 222 930L222 1104Q373 1175 486 1276Q599 1377 646 1472L763 1472Z" fill="#000" transform="translate(0,13) scale(0.007324,-0.007324)"/></svg>
<svg style="position:absolute;left:1044.46px;top:445px" width="10" height="16"><path d="M763 0L583 0L583 1147Q518 1085 412 1023Q306 961 222 930L222 1104Q373 1175 486 1276Q599 1377 646 1472L763 1472Z" fill="#000" transform="translate(0,13) scale(0.007324,-0.007324)"/></svg>
<svg style="position:absolute;left:1136.46px;top:445px" width="10" height="16"><path d="M763 0L583 0L583 1147Q518 1085 412 1023Q306 961 222 930L222 1104Q373 1175 486 1276Q599 1377 646 1472L763 1472Z" fill="#000" transform="translate(0,13) scale(0.007324,-0.007324)"/></svg>
<svg style="position:absolute;left:1228.46px;top:445px" width="10" height="16"><path d="M763 0L583 0L583 1147Q518 1085 412 1023Q306 961 222 930L222 1104Q373 1175 486 1276Q599 1377 646 1472L763 1472Z" fill="#000" transform="translate(0,13) scale(0.007324,-0.007324)"/></svg>
<svg style="position:absolute;left:1320.46px;top:445px" width="10" height="16"><path d="M763 0L583 0L583 1147Q518 1085 412 1023Q306 961 222 930L222 1104Q373 1175 486 1276Q599 1377 646 1472L763 1472Z" fill="#000" transform="translate(0,13) scale(0.007324,-0.007324)"/></svg>
<svg style="position:absolute;left:1412.46px;top:445px" width="10" height="16"><path d="M763 0L583 0L583 1147Q518 1085 412 1023Q306 961 222 930L222 1104Q373 1175 486 1276Q599 1377 646 1472L763 1472Z" fill="#000" transform="translate(0,13) scale(0.007324,-0.007324)"/></svg>
<svg style="position:absolute;left:1504.46px;top:445px" width="10" height="16"><path d="M763 0L583 0L583 1147Q518 1085 412 1023Q306 961 222 930L222 1104Q373 1175 486 1276Q599 1377 646 1472L763 1472Z" fill="#000" transform="translate(0,13) scale(0.007324,-0.007324)"/></svg>
<div class="t" style="left:68px;top:484.76px;font-size:18px;line-height:20px;font-weight:bold;color:#000;font-style:normal;letter-spacing:0.135px;">Produktion &amp; Herstellung</div>
<div style="left:65px;top:507px;width:375px;height:79px;background:#fff;"></div>
<div style="left:440px;top:507px;width:90px;height:60px;background:#bde3ea;"></div>
<div style="left:440px;top:506px;width:265px;height:1px;background:#5f686a;"></div>
<div style="left:440px;top:526px;width:265px;height:1px;background:#5f686a;"></div>
<div style="left:440px;top:546px;width:265px;height:1px;background:#5f686a;"></div>
<div style="left:440px;top:566px;width:265px;height:1px;background:#5f686a;"></div>
<div style="left:440px;top:506px;width:1px;height:61px;background:#5f686a;"></div>
<div style="left:530px;top:506px;width:1px;height:61px;background:#5f686a;"></div>
<div style="left:704px;top:506px;width:1px;height:61px;background:#5f686a;"></div>
<div style="left:876px;top:507px;width:645px;height:60px;background:#bde3ea;"></div>
<div style="left:876px;top:567px;width:645px;height:19px;background:#fff;"></div>
<div style="left:876px;top:506px;width:645px;height:1px;background:#667d83;"></div>
<div style="left:876px;top:526px;width:645px;height:1px;background:#667d83;"></div>
<div style="left:876px;top:546px;width:645px;height:1px;background:#667d83;"></div>
<div style="left:876px;top:566px;width:645px;height:1px;background:#667d83;"></div>
<div style="left:876px;top:586px;width:645px;height:1px;background:#667d83;"></div>
<div style="left:967px;top:506px;width:1px;height:61px;background:#667d83;"></div>
<div style="left:1059px;top:506px;width:1px;height:61px;background:#667d83;"></div>
<div style="left:1151px;top:506px;width:1px;height:61px;background:#667d83;"></div>
<div style="left:1243px;top:506px;width:1px;height:61px;background:#667d83;"></div>
<div style="left:1335px;top:506px;width:1px;height:61px;background:#667d83;"></div>
<div style="left:1427px;top:506px;width:1px;height:61px;background:#667d83;"></div>
<div style="left:1519px;top:506px;width:1px;height:61px;background:#667d83;"></div>
<div class="t" style="left:79px;top:506.80px;font-size:15px;line-height:20px;font-weight:normal;color:#000;font-style:normal;letter-spacing:0.000px;">Beschaffung</div>
<div class="t" style="left:338px;top:506.80px;font-size:15px;line-height:20px;font-weight:normal;color:#808080;font-style:normal;letter-spacing:-0.570px;">Zahl</div>
<svg style="position:absolute;left:483.83px;top:509px" width="10" height="16"><path d="M763 0L583 0L583 1147Q518 1085 412 1023Q306 961 222 930L222 1104Q373 1175 486 1276Q599 1377 646 1472L763 1472Z" fill="#1c75bc" transform="translate(0,13) scale(0.007324,-0.007324)"/></svg>
<div class="t" style="left:541px;top:506.80px;font-size:15px;line-height:20px;font-weight:normal;color:#626262;font-style:normal;letter-spacing:-0.520px;">Detailliert</div>
<div style="left:525px;top:507px;width:0;height:0;border-top:5px solid #c4001c;border-left:5px solid transparent;"></div>
<div style="left:778px;top:507px;width:0;height:0;border-top:5px solid #c4001c;border-left:5px solid transparent;"></div>
<div class="t" style="left:644px;top:507.80px;font-size:15px;line-height:20px;font-weight:normal;color:#1c75bc;font-style:normal;width:300px;text-align:right;">-</div>
<div class="t" style="left:736px;top:507.80px;font-size:15px;line-height:20px;font-weight:normal;color:#1c75bc;font-style:normal;width:300px;text-align:right;">-</div>
<div class="t" style="left:828px;top:507.80px;font-size:15px;line-height:20px;font-weight:normal;color:#1c75bc;font-style:normal;width:300px;text-align:right;">-</div>
<div class="t" style="left:920px;top:507.80px;font-size:15px;line-height:20px;font-weight:normal;color:#1c75bc;font-style:normal;width:300px;text-align:right;">-</div>
<div class="t" style="left:1012px;top:507.80px;font-size:15px;line-height:20px;font-weight:normal;color:#1c75bc;font-style:normal;width:300px;text-align:right;">-</div>
<div class="t" style="left:1104px;top:507.80px;font-size:15px;line-height:20px;font-weight:normal;color:#1c75bc;font-style:normal;width:300px;text-align:right;">-</div>
<div class="t" style="left:1196px;top:507.80px;font-size:15px;line-height:20px;font-weight:normal;color:#1c75bc;font-style:normal;width:300px;text-align:right;">-</div>
<div class="t" style="left:79px;top:526.80px;font-size:15px;line-height:20px;font-weight:normal;color:#000;font-style:normal;letter-spacing:-0.220px;">Fertigung (Minijobs)</div>
<div class="t" style="left:338px;top:526.80px;font-size:15px;line-height:20px;font-weight:normal;color:#808080;font-style:normal;letter-spacing:-0.570px;">Zahl</div>
<div class="t" style="left:441.5px;top:526.80px;font-size:15px;line-height:20px;font-weight:normal;color:#1c75bc;font-style:normal;width:90px;text-align:center;">2</div>
<div class="t" style="left:541px;top:526.80px;font-size:15px;line-height:20px;font-weight:normal;color:#626262;font-style:normal;letter-spacing:-0.120px;">Pauschaliert</div>
<div style="left:525px;top:527px;width:0;height:0;border-top:5px solid #c4001c;border-left:5px solid transparent;"></div>
<div style="left:778px;top:527px;width:0;height:0;border-top:5px solid #c4001c;border-left:5px solid transparent;"></div>
<svg style="position:absolute;left:952.46px;top:529px" width="10" height="16"><path d="M763 0L583 0L583 1147Q518 1085 412 1023Q306 961 222 930L222 1104Q373 1175 486 1276Q599 1377 646 1472L763 1472Z" fill="#1c75bc" transform="translate(0,13) scale(0.007324,-0.007324)"/></svg>
<svg style="position:absolute;left:1044.46px;top:529px" width="10" height="16"><path d="M763 0L583 0L583 1147Q518 1085 412 1023Q306 961 222 930L222 1104Q373 1175 486 1276Q599 1377 646 1472L763 1472Z" fill="#1c75bc" transform="translate(0,13) scale(0.007324,-0.007324)"/></svg>
<svg style="position:absolute;left:1136.46px;top:529px" width="10" height="16"><path d="M763 0L583 0L583 1147Q518 1085 412 1023Q306 961 222 930L222 1104Q373 1175 486 1276Q599 1377 646 1472L763 1472Z" fill="#1c75bc" transform="translate(0,13) scale(0.007324,-0.007324)"/></svg>
<svg style="position:absolute;left:1228.46px;top:529px" width="10" height="16"><path d="M763 0L583 0L583 1147Q518 1085 412 1023Q306 961 222 930L222 1104Q373 1175 486 1276Q599 1377 646 1472L763 1472Z" fill="#1c75bc" transform="translate(0,13) scale(0.007324,-0.007324)"/></svg>
<svg style="position:absolute;left:1320.46px;top:529px" width="10" height="16"><path d="M763 0L583 0L583 1147Q518 1085 412 1023Q306 961 222 930L222 1104Q373 1175 486 1276Q599 1377 646 1472L763 1472Z" fill="#1c75bc" transform="translate(0,13) scale(0.007324,-0.007324)"/></svg>
<svg style="position:absolute;left:1412.46px;top:529px" width="10" height="16"><path d="M763 0L583 0L583 1147Q518 1085 412 1023Q306 961 222 930L222 1104Q373 1175 486 1276Q599 1377 646 1472L763 1472Z" fill="#1c75bc" transform="translate(0,13) scale(0.007324,-0.007324)"/></svg>
<div class="t" style="left:1212px;top:526.80px;font-size:15px;line-height:20px;font-weight:normal;color:#1c75bc;font-style:normal;width:300px;text-align:right;">2</div>
<div class="t" style="left:79px;top:546.80px;font-size:15px;line-height:20px;font-weight:normal;color:#000;font-style:normal;letter-spacing:-0.190px;">Logistik</div>
<div class="t" style="left:338px;top:546.80px;font-size:15px;line-height:20px;font-weight:normal;color:#808080;font-style:normal;letter-spacing:-0.570px;">Zahl</div>
<svg style="position:absolute;left:483.83px;top:549px" width="10" height="16"><path d="M763 0L583 0L583 1147Q518 1085 412 1023Q306 961 222 930L222 1104Q373 1175 486 1276Q599 1377 646 1472L763 1472Z" fill="#1c75bc" transform="translate(0,13) scale(0.007324,-0.007324)"/></svg>
<div class="t" style="left:541px;top:546.80px;font-size:15px;line-height:20px;font-weight:normal;color:#626262;font-style:normal;letter-spacing:-0.520px;">Detailliert</div>
<div style="left:525px;top:547px;width:0;height:0;border-top:5px solid #c4001c;border-left:5px solid transparent;"></div>
<div style="left:778px;top:547px;width:0;height:0;border-top:5px solid #c4001c;border-left:5px solid transparent;"></div>
<div class="t" style="left:644px;top:547.80px;font-size:15px;line-height:20px;font-weight:normal;color:#1c75bc;font-style:normal;width:300px;text-align:right;">-</div>
<div class="t" style="left:736px;top:547.80px;font-size:15px;line-height:20px;font-weight:normal;color:#1c75bc;font-style:normal;width:300px;text-align:right;">-</div>
<div class="t" style="left:828px;top:547.80px;font-size:15px;line-height:20px;font-weight:normal;color:#1c75bc;font-style:normal;width:300px;text-align:right;">-</div>
<div class="t" style="left:920px;top:547.80px;font-size:15px;line-height:20px;font-weight:normal;color:#1c75bc;font-style:normal;width:300px;text-align:right;">-</div>
<div class="t" style="left:1012px;top:547.80px;font-size:15px;line-height:20px;font-weight:normal;color:#1c75bc;font-style:normal;width:300px;text-align:right;">-</div>
<div class="t" style="left:1104px;top:547.80px;font-size:15px;line-height:20px;font-weight:normal;color:#1c75bc;font-style:normal;width:300px;text-align:right;">-</div>
<div class="t" style="left:1196px;top:547.80px;font-size:15px;line-height:20px;font-weight:normal;color:#1c75bc;font-style:normal;width:300px;text-align:right;">-</div>
<div class="t" style="left:87px;top:566.97px;font-size:14.5px;line-height:20px;font-weight:bold;color:#000;font-style:normal;">Zwischensumme</div>
<svg style="position:absolute;left:952.46px;top:569px" width="10" height="16"><path d="M763 0L583 0L583 1147Q518 1085 412 1023Q306 961 222 930L222 1104Q373 1175 486 1276Q599 1377 646 1472L763 1472Z" fill="#000" transform="translate(0,13) scale(0.007324,-0.007324)"/></svg>
<svg style="position:absolute;left:1044.46px;top:569px" width="10" height="16"><path d="M763 0L583 0L583 1147Q518 1085 412 1023Q306 961 222 930L222 1104Q373 1175 486 1276Q599 1377 646 1472L763 1472Z" fill="#000" transform="translate(0,13) scale(0.007324,-0.007324)"/></svg>
<svg style="position:absolute;left:1136.46px;top:569px" width="10" height="16"><path d="M763 0L583 0L583 1147Q518 1085 412 1023Q306 961 222 930L222 1104Q373 1175 486 1276Q599 1377 646 1472L763 1472Z" fill="#000" transform="translate(0,13) scale(0.007324,-0.007324)"/></svg>
<svg style="position:absolute;left:1228.46px;top:569px" width="10" height="16"><path d="M763 0L583 0L583 1147Q518 1085 412 1023Q306 961 222 930L222 1104Q373 1175 486 1276Q599 1377 646 1472L763 1472Z" fill="#000" transform="translate(0,13) scale(0.007324,-0.007324)"/></svg>
<svg style="position:absolute;left:1320.46px;top:569px" width="10" height="16"><path d="M763 0L583 0L583 1147Q518 1085 412 1023Q306 961 222 930L222 1104Q373 1175 486 1276Q599 1377 646 1472L763 1472Z" fill="#000" transform="translate(0,13) scale(0.007324,-0.007324)"/></svg>
<svg style="position:absolute;left:1412.46px;top:569px" width="10" height="16"><path d="M763 0L583 0L583 1147Q518 1085 412 1023Q306 961 222 930L222 1104Q373 1175 486 1276Q599 1377 646 1472L763 1472Z" fill="#000" transform="translate(0,13) scale(0.007324,-0.007324)"/></svg>
<div class="t" style="left:1212px;top:566.80px;font-size:15px;line-height:20px;font-weight:normal;color:#000;font-style:normal;width:300px;text-align:right;">2</div>
<div class="t" style="left:68px;top:608.76px;font-size:18px;line-height:20px;font-weight:bold;color:#000;font-style:normal;letter-spacing:0.33px;">Marketing &amp; Vertrieb</div>
<div style="left:65px;top:631px;width:375px;height:79px;background:#fff;"></div>
<div style="left:440px;top:631px;width:90px;height:60px;background:#bde3ea;"></div>
<div style="left:440px;top:630px;width:265px;height:1px;background:#5f686a;"></div>
<div style="left:440px;top:650px;width:265px;height:1px;background:#5f686a;"></div>
<div style="left:440px;top:670px;width:265px;height:1px;background:#5f686a;"></div>
<div style="left:440px;top:690px;width:265px;height:1px;background:#5f686a;"></div>
<div style="left:440px;top:630px;width:1px;height:61px;background:#5f686a;"></div>
<div style="left:530px;top:630px;width:1px;height:61px;background:#5f686a;"></div>
<div style="left:704px;top:630px;width:1px;height:61px;background:#5f686a;"></div>
<div style="left:876px;top:631px;width:645px;height:60px;background:#bde3ea;"></div>
<div style="left:876px;top:691px;width:645px;height:19px;background:#fff;"></div>
<div style="left:876px;top:630px;width:645px;height:1px;background:#667d83;"></div>
<div style="left:876px;top:650px;width:645px;height:1px;background:#667d83;"></div>
<div style="left:876px;top:670px;width:645px;height:1px;background:#667d83;"></div>
<div style="left:876px;top:690px;width:645px;height:1px;background:#667d83;"></div>
<div style="left:876px;top:710px;width:645px;height:1px;background:#667d83;"></div>
<div style="left:967px;top:630px;width:1px;height:61px;background:#667d83;"></div>
<div style="left:1059px;top:630px;width:1px;height:61px;background:#667d83;"></div>
<div style="left:1151px;top:630px;width:1px;height:61px;background:#667d83;"></div>
<div style="left:1243px;top:630px;width:1px;height:61px;background:#667d83;"></div>
<div style="left:1335px;top:630px;width:1px;height:61px;background:#667d83;"></div>
<div style="left:1427px;top:630px;width:1px;height:61px;background:#667d83;"></div>
<div style="left:1519px;top:630px;width:1px;height:61px;background:#667d83;"></div>
<div class="t" style="left:79px;top:630.80px;font-size:15px;line-height:20px;font-weight:normal;color:#000;font-style:normal;letter-spacing:-0.340px;">Marketing</div>
<div class="t" style="left:338px;top:630.80px;font-size:15px;line-height:20px;font-weight:normal;color:#808080;font-style:normal;letter-spacing:-0.570px;">Zahl</div>
<svg style="position:absolute;left:483.83px;top:633px" width="10" height="16"><path d="M763 0L583 0L583 1147Q518 1085 412 1023Q306 961 222 930L222 1104Q373 1175 486 1276Q599 1377 646 1472L763 1472Z" fill="#1c75bc" transform="translate(0,13) scale(0.007324,-0.007324)"/></svg>
<div class="t" style="left:541px;top:630.80px;font-size:15px;line-height:20px;font-weight:normal;color:#626262;font-style:normal;letter-spacing:-0.520px;">Detailliert</div>
<div style="left:525px;top:631px;width:0;height:0;border-top:5px solid #c4001c;border-left:5px solid transparent;"></div>
<div style="left:778px;top:631px;width:0;height:0;border-top:5px solid #c4001c;border-left:5px solid transparent;"></div>
<div class="t" style="left:644px;top:631.80px;font-size:15px;line-height:20px;font-weight:normal;color:#1c75bc;font-style:normal;width:300px;text-align:right;">-</div>
<div class="t" style="left:736px;top:631.80px;font-size:15px;line-height:20px;font-weight:normal;color:#1c75bc;font-style:normal;width:300px;text-align:right;">-</div>
<div class="t" style="left:828px;top:631.80px;font-size:15px;line-height:20px;font-weight:normal;color:#1c75bc;font-style:normal;width:300px;text-align:right;">-</div>
<div class="t" style="left:920px;top:631.80px;font-size:15px;line-height:20px;font-weight:normal;color:#1c75bc;font-style:normal;width:300px;text-align:right;">-</div>
<svg style="position:absolute;left:1320.46px;top:633px" width="10" height="16"><path d="M763 0L583 0L583 1147Q518 1085 412 1023Q306 961 222 930L222 1104Q373 1175 486 1276Q599 1377 646 1472L763 1472Z" fill="#1c75bc" transform="translate(0,13) scale(0.007324,-0.007324)"/></svg>
<svg style="position:absolute;left:1412.46px;top:633px" width="10" height="16"><path d="M763 0L583 0L583 1147Q518 1085 412 1023Q306 961 222 930L222 1104Q373 1175 486 1276Q599 1377 646 1472L763 1472Z" fill="#1c75bc" transform="translate(0,13) scale(0.007324,-0.007324)"/></svg>
<svg style="position:absolute;left:1504.46px;top:633px" width="10" height="16"><path d="M763 0L583 0L583 1147Q518 1085 412 1023Q306 961 222 930L222 1104Q373 1175 486 1276Q599 1377 646 1472L763 1472Z" fill="#1c75bc" transform="translate(0,13) scale(0.007324,-0.007324)"/></svg>
<div class="t" style="left:79px;top:650.80px;font-size:15px;line-height:20px;font-weight:normal;color:#000;font-style:normal;letter-spacing:-0.170px;">Verkauf</div>
<div class="t" style="left:338px;top:650.80px;font-size:15px;line-height:20px;font-weight:normal;color:#808080;font-style:normal;letter-spacing:-0.570px;">Zahl</div>
<svg style="position:absolute;left:483.83px;top:653px" width="10" height="16"><path d="M763 0L583 0L583 1147Q518 1085 412 1023Q306 961 222 930L222 1104Q373 1175 486 1276Q599 1377 646 1472L763 1472Z" fill="#1c75bc" transform="translate(0,13) scale(0.007324,-0.007324)"/></svg>
<div class="t" style="left:541px;top:650.80px;font-size:15px;line-height:20px;font-weight:normal;color:#626262;font-style:normal;letter-spacing:-0.520px;">Detailliert</div>
<div style="left:525px;top:651px;width:0;height:0;border-top:5px solid #c4001c;border-left:5px solid transparent;"></div>
<div style="left:778px;top:651px;width:0;height:0;border-top:5px solid #c4001c;border-left:5px solid transparent;"></div>
<div class="t" style="left:644px;top:651.80px;font-size:15px;line-height:20px;font-weight:normal;color:#1c75bc;font-style:normal;width:300px;text-align:right;">-</div>
<div class="t" style="left:736px;top:651.80px;font-size:15px;line-height:20px;font-weight:normal;color:#1c75bc;font-style:normal;width:300px;text-align:right;">-</div>
<div class="t" style="left:828px;top:651.80px;font-size:15px;line-height:20px;font-weight:normal;color:#1c75bc;font-style:normal;width:300px;text-align:right;">-</div>
<div class="t" style="left:920px;top:651.80px;font-size:15px;line-height:20px;font-weight:normal;color:#1c75bc;font-style:normal;width:300px;text-align:right;">-</div>
<div class="t" style="left:1012px;top:651.80px;font-size:15px;line-height:20px;font-weight:normal;color:#1c75bc;font-style:normal;width:300px;text-align:right;">-</div>
<div class="t" style="left:1104px;top:651.80px;font-size:15px;line-height:20px;font-weight:normal;color:#1c75bc;font-style:normal;width:300px;text-align:right;">-</div>
<div class="t" style="left:1196px;top:651.80px;font-size:15px;line-height:20px;font-weight:normal;color:#1c75bc;font-style:normal;width:300px;text-align:right;">-</div>
<div class="t" style="left:79px;top:670.80px;font-size:15px;line-height:20px;font-weight:normal;color:#000;font-style:normal;letter-spacing:-0.070px;">Service</div>
<div class="t" style="left:338px;top:670.80px;font-size:15px;line-height:20px;font-weight:normal;color:#808080;font-style:normal;letter-spacing:-0.570px;">Zahl</div>
<svg style="position:absolute;left:483.83px;top:673px" width="10" height="16"><path d="M763 0L583 0L583 1147Q518 1085 412 1023Q306 961 222 930L222 1104Q373 1175 486 1276Q599 1377 646 1472L763 1472Z" fill="#1c75bc" transform="translate(0,13) scale(0.007324,-0.007324)"/></svg>
<div class="t" style="left:541px;top:670.80px;font-size:15px;line-height:20px;font-weight:normal;color:#626262;font-style:normal;letter-spacing:-0.520px;">Detailliert</div>
<div style="left:525px;top:671px;width:0;height:0;border-top:5px solid #c4001c;border-left:5px solid transparent;"></div>
<div style="left:778px;top:671px;width:0;height:0;border-top:5px solid #c4001c;border-left:5px solid transparent;"></div>
<div class="t" style="left:644px;top:671.80px;font-size:15px;line-height:20px;font-weight:normal;color:#1c75bc;font-style:normal;width:300px;text-align:right;">-</div>
<div class="t" style="left:736px;top:671.80px;font-size:15px;line-height:20px;font-weight:normal;color:#1c75bc;font-style:normal;width:300px;text-align:right;">-</div>
<div class="t" style="left:828px;top:671.80px;font-size:15px;line-height:20px;font-weight:normal;color:#1c75bc;font-style:normal;width:300px;text-align:right;">-</div>
<div class="t" style="left:920px;top:671.80px;font-size:15px;line-height:20px;font-weight:normal;color:#1c75bc;font-style:normal;width:300px;text-align:right;">-</div>
<div class="t" style="left:1012px;top:671.80px;font-size:15px;line-height:20px;font-weight:normal;color:#1c75bc;font-style:normal;width:300px;text-align:right;">-</div>
<div class="t" style="left:1104px;top:671.80px;font-size:15px;line-height:20px;font-weight:normal;color:#1c75bc;font-style:normal;width:300px;text-align:right;">-</div>
<div class="t" style="left:1196px;top:671.80px;font-size:15px;line-height:20px;font-weight:normal;color:#1c75bc;font-style:normal;width:300px;text-align:right;">-</div>
<div class="t" style="left:87px;top:690.97px;font-size:14.5px;line-height:20px;font-weight:bold;color:#000;font-style:normal;">Zwischensumme</div>
<div class="t" style="left:644px;top:691.80px;font-size:15px;line-height:20px;font-weight:normal;color:#000;font-style:normal;width:300px;text-align:right;">-</div>
<div class="t" style="left:736px;top:691.80px;font-size:15px;line-height:20px;font-weight:normal;color:#000;font-style:normal;width:300px;text-align:right;">-</div>
<div class="t" style="left:828px;top:691.80px;font-size:15px;line-height:20px;font-weight:normal;color:#000;font-style:normal;width:300px;text-align:right;">-</div>
<div class="t" style="left:920px;top:691.80px;font-size:15px;line-height:20px;font-weight:normal;color:#000;font-style:normal;width:300px;text-align:right;">-</div>
<svg style="position:absolute;left:1320.46px;top:693px" width="10" height="16"><path d="M763 0L583 0L583 1147Q518 1085 412 1023Q306 961 222 930L222 1104Q373 1175 486 1276Q599 1377 646 1472L763 1472Z" fill="#000" transform="translate(0,13) scale(0.007324,-0.007324)"/></svg>
<svg style="position:absolute;left:1412.46px;top:693px" width="10" height="16"><path d="M763 0L583 0L583 1147Q518 1085 412 1023Q306 961 222 930L222 1104Q373 1175 486 1276Q599 1377 646 1472L763 1472Z" fill="#000" transform="translate(0,13) scale(0.007324,-0.007324)"/></svg>
<svg style="position:absolute;left:1504.46px;top:693px" width="10" height="16"><path d="M763 0L583 0L583 1147Q518 1085 412 1023Q306 961 222 930L222 1104Q373 1175 486 1276Q599 1377 646 1472L763 1472Z" fill="#000" transform="translate(0,13) scale(0.007324,-0.007324)"/></svg>
<div class="t" style="left:68px;top:732.76px;font-size:18px;line-height:20px;font-weight:bold;color:#000;font-style:normal;letter-spacing:0.57px;">Verwaltung</div>
<div style="left:65px;top:755px;width:375px;height:79px;background:#fff;"></div>
<div style="left:440px;top:755px;width:90px;height:60px;background:#bde3ea;"></div>
<div style="left:440px;top:754px;width:265px;height:1px;background:#5f686a;"></div>
<div style="left:440px;top:774px;width:265px;height:1px;background:#5f686a;"></div>
<div style="left:440px;top:794px;width:265px;height:1px;background:#5f686a;"></div>
<div style="left:440px;top:814px;width:265px;height:1px;background:#5f686a;"></div>
<div style="left:440px;top:754px;width:1px;height:61px;background:#5f686a;"></div>
<div style="left:530px;top:754px;width:1px;height:61px;background:#5f686a;"></div>
<div style="left:704px;top:754px;width:1px;height:61px;background:#5f686a;"></div>
<div style="left:876px;top:755px;width:645px;height:60px;background:#bde3ea;"></div>
<div style="left:876px;top:815px;width:645px;height:19px;background:#fff;"></div>
<div style="left:876px;top:754px;width:645px;height:1px;background:#667d83;"></div>
<div style="left:876px;top:774px;width:645px;height:1px;background:#667d83;"></div>
<div style="left:876px;top:794px;width:645px;height:1px;background:#667d83;"></div>
<div style="left:876px;top:814px;width:645px;height:1px;background:#667d83;"></div>
<div style="left:876px;top:834px;width:645px;height:1px;background:#667d83;"></div>
<div style="left:967px;top:754px;width:1px;height:61px;background:#667d83;"></div>
<div style="left:1059px;top:754px;width:1px;height:61px;background:#667d83;"></div>
<div style="left:1151px;top:754px;width:1px;height:61px;background:#667d83;"></div>
<div style="left:1243px;top:754px;width:1px;height:61px;background:#667d83;"></div>
<div style="left:1335px;top:754px;width:1px;height:61px;background:#667d83;"></div>
<div style="left:1427px;top:754px;width:1px;height:61px;background:#667d83;"></div>
<div style="left:1519px;top:754px;width:1px;height:61px;background:#667d83;"></div>
<div class="t" style="left:79px;top:754.80px;font-size:15px;line-height:20px;font-weight:normal;color:#000;font-style:normal;letter-spacing:-0.070px;">Buchhaltung</div>
<div class="t" style="left:338px;top:754.80px;font-size:15px;line-height:20px;font-weight:normal;color:#808080;font-style:normal;letter-spacing:-0.570px;">Zahl</div>
<svg style="position:absolute;left:483.83px;top:757px" width="10" height="16"><path d="M763 0L583 0L583 1147Q518 1085 412 1023Q306 961 222 930L222 1104Q373 1175 486 1276Q599 1377 646 1472L763 1472Z" fill="#1c75bc" transform="translate(0,13) scale(0.007324,-0.007324)"/></svg>
<div class="t" style="left:541px;top:754.80px;font-size:15px;line-height:20px;font-weight:normal;color:#626262;font-style:normal;letter-spacing:-0.520px;">Detailliert</div>
<div style="left:525px;top:755px;width:0;height:0;border-top:5px solid #c4001c;border-left:5px solid transparent;"></div>
<div style="left:778px;top:755px;width:0;height:0;border-top:5px solid #c4001c;border-left:5px solid transparent;"></div>
<div class="t" style="left:644px;top:755.80px;font-size:15px;line-height:20px;font-weight:normal;color:#1c75bc;font-style:normal;width:300px;text-align:right;">-</div>
<div class="t" style="left:736px;top:755.80px;font-size:15px;line-height:20px;font-weight:normal;color:#1c75bc;font-style:normal;width:300px;text-align:right;">-</div>
<div class="t" style="left:828px;top:755.80px;font-size:15px;line-height:20px;font-weight:normal;color:#1c75bc;font-style:normal;width:300px;text-align:right;">-</div>
<div class="t" style="left:920px;top:755.80px;font-size:15px;line-height:20px;font-weight:normal;color:#1c75bc;font-style:normal;width:300px;text-align:right;">-</div>
<div class="t" style="left:1012px;top:755.80px;font-size:15px;line-height:20px;font-weight:normal;color:#1c75bc;font-style:normal;width:300px;text-align:right;">-</div>
<div class="t" style="left:1104px;top:755.80px;font-size:15px;line-height:20px;font-weight:normal;color:#1c75bc;font-style:normal;width:300px;text-align:right;">-</div>
<div class="t" style="left:1196px;top:755.80px;font-size:15px;line-height:20px;font-weight:normal;color:#1c75bc;font-style:normal;width:300px;text-align:right;">-</div>
<div class="t" style="left:79px;top:774.80px;font-size:15px;line-height:20px;font-weight:normal;color:#000;font-style:normal;letter-spacing:0.000px;">Personal</div>
<div class="t" style="left:338px;top:774.80px;font-size:15px;line-height:20px;font-weight:normal;color:#808080;font-style:normal;letter-spacing:-0.570px;">Zahl</div>
<svg style="position:absolute;left:483.83px;top:777px" width="10" height="16"><path d="M763 0L583 0L583 1147Q518 1085 412 1023Q306 961 222 930L222 1104Q373 1175 486 1276Q599 1377 646 1472L763 1472Z" fill="#1c75bc" transform="translate(0,13) scale(0.007324,-0.007324)"/></svg>
<div class="t" style="left:541px;top:774.80px;font-size:15px;line-height:20px;font-weight:normal;color:#626262;font-style:normal;letter-spacing:-0.520px;">Detailliert</div>
<div style="left:525px;top:775px;width:0;height:0;border-top:5px solid #c4001c;border-left:5px solid transparent;"></div>
<div style="left:778px;top:775px;width:0;height:0;border-top:5px solid #c4001c;border-left:5px solid transparent;"></div>
<div class="t" style="left:644px;top:775.80px;font-size:15px;line-height:20px;font-weight:normal;color:#1c75bc;font-style:normal;width:300px;text-align:right;">-</div>
<div class="t" style="left:736px;top:775.80px;font-size:15px;line-height:20px;font-weight:normal;color:#1c75bc;font-style:normal;width:300px;text-align:right;">-</div>
<div class="t" style="left:828px;top:775.80px;font-size:15px;line-height:20px;font-weight:normal;color:#1c75bc;font-style:normal;width:300px;text-align:right;">-</div>
<div class="t" style="left:920px;top:775.80px;font-size:15px;line-height:20px;font-weight:normal;color:#1c75bc;font-style:normal;width:300px;text-align:right;">-</div>
<div class="t" style="left:1012px;top:775.80px;font-size:15px;line-height:20px;font-weight:normal;color:#1c75bc;font-style:normal;width:300px;text-align:right;">-</div>
<div class="t" style="left:1104px;top:775.80px;font-size:15px;line-height:20px;font-weight:normal;color:#1c75bc;font-style:normal;width:300px;text-align:right;">-</div>
<div class="t" style="left:1196px;top:775.80px;font-size:15px;line-height:20px;font-weight:normal;color:#1c75bc;font-style:normal;width:300px;text-align:right;">-</div>
<div class="t" style="left:79px;top:794.80px;font-size:15px;line-height:20px;font-weight:normal;color:#000;font-style:normal;letter-spacing:-0.110px;">Sekretariat</div>
<div class="t" style="left:338px;top:794.80px;font-size:15px;line-height:20px;font-weight:normal;color:#808080;font-style:normal;letter-spacing:-0.570px;">Zahl</div>
<svg style="position:absolute;left:483.83px;top:797px" width="10" height="16"><path d="M763 0L583 0L583 1147Q518 1085 412 1023Q306 961 222 930L222 1104Q373 1175 486 1276Q599 1377 646 1472L763 1472Z" fill="#1c75bc" transform="translate(0,13) scale(0.007324,-0.007324)"/></svg>
<div class="t" style="left:541px;top:794.80px;font-size:15px;line-height:20px;font-weight:normal;color:#626262;font-style:normal;letter-spacing:-0.520px;">Detailliert</div>
<div style="left:525px;top:795px;width:0;height:0;border-top:5px solid #c4001c;border-left:5px solid transparent;"></div>
<div style="left:778px;top:795px;width:0;height:0;border-top:5px solid #c4001c;border-left:5px solid transparent;"></div>
<div class="t" style="left:644px;top:795.80px;font-size:15px;line-height:20px;font-weight:normal;color:#1c75bc;font-style:normal;width:300px;text-align:right;">-</div>
<div class="t" style="left:736px;top:795.80px;font-size:15px;line-height:20px;font-weight:normal;color:#1c75bc;font-style:normal;width:300px;text-align:right;">-</div>
<div class="t" style="left:828px;top:795.80px;font-size:15px;line-height:20px;font-weight:normal;color:#1c75bc;font-style:normal;width:300px;text-align:right;">-</div>
<div class="t" style="left:920px;top:795.80px;font-size:15px;line-height:20px;font-weight:normal;color:#1c75bc;font-style:normal;width:300px;text-align:right;">-</div>
<div class="t" style="left:1012px;top:795.80px;font-size:15px;line-height:20px;font-weight:normal;color:#1c75bc;font-style:normal;width:300px;text-align:right;">-</div>
<div class="t" style="left:1104px;top:795.80px;font-size:15px;line-height:20px;font-weight:normal;color:#1c75bc;font-style:normal;width:300px;text-align:right;">-</div>
<div class="t" style="left:1196px;top:795.80px;font-size:15px;line-height:20px;font-weight:normal;color:#1c75bc;font-style:normal;width:300px;text-align:right;">-</div>
<div class="t" style="left:87px;top:814.97px;font-size:14.5px;line-height:20px;font-weight:bold;color:#000;font-style:normal;">Zwischensumme</div>
<div class="t" style="left:644px;top:815.80px;font-size:15px;line-height:20px;font-weight:normal;color:#000;font-style:normal;width:300px;text-align:right;">-</div>
<div class="t" style="left:736px;top:815.80px;font-size:15px;line-height:20px;font-weight:normal;color:#000;font-style:normal;width:300px;text-align:right;">-</div>
<div class="t" style="left:828px;top:815.80px;font-size:15px;line-height:20px;font-weight:normal;color:#000;font-style:normal;width:300px;text-align:right;">-</div>
<div class="t" style="left:920px;top:815.80px;font-size:15px;line-height:20px;font-weight:normal;color:#000;font-style:normal;width:300px;text-align:right;">-</div>
<div class="t" style="left:1012px;top:815.80px;font-size:15px;line-height:20px;font-weight:normal;color:#000;font-style:normal;width:300px;text-align:right;">-</div>
<div class="t" style="left:1104px;top:815.80px;font-size:15px;line-height:20px;font-weight:normal;color:#000;font-style:normal;width:300px;text-align:right;">-</div>
<div class="t" style="left:1196px;top:815.80px;font-size:15px;line-height:20px;font-weight:normal;color:#000;font-style:normal;width:300px;text-align:right;">-</div>
<div style="left:440px;top:214px;width:264px;height:25px;background:#263471;box-sizing:border-box;border:1px solid #000;"></div>
<div style="left:530px;top:214px;width:1px;height:24px;background:#000;"></div>
<div class="t" style="left:440px;top:217.47px;font-size:14.5px;line-height:20px;font-weight:normal;color:#fff;font-style:normal;width:90px;text-align:center;">Auswahl</div>
<div class="t" style="left:530px;top:217.47px;font-size:14.5px;line-height:20px;font-weight:normal;color:#fff;font-style:normal;width:175px;text-align:center;letter-spacing:-0.08px;">Berechnung Lohnnebenk.</div>
<div style="left:525px;top:215px;width:0;height:0;border-top:5px solid #c4001c;border-left:5px solid transparent;"></div>
<div style="left:65px;top:855px;width:375px;height:20px;background:#fff;"></div>
<div class="t" style="left:67px;top:854.97px;font-size:14.5px;line-height:20px;font-weight:bold;color:#000;font-style:normal;">Gesamtsumme</div>
<div class="t" style="left:338px;top:854.80px;font-size:15px;line-height:20px;font-weight:normal;color:#808080;font-style:normal;letter-spacing:-0.570px;">Zahl</div>
<div style="left:876px;top:855px;width:645px;height:19px;background:#fff;"></div>
<div style="left:876px;top:854px;width:645px;height:1px;background:#5f686a;"></div>
<div style="left:876px;top:874px;width:645px;height:1px;background:#404040;"></div>
<div style="left:876px;top:875px;width:645px;height:1px;background:#fff;"></div>
<div style="left:876px;top:876px;width:645px;height:1px;background:#404040;"></div>
<div style="left:876px;top:877px;width:645px;height:19px;background:#fff;"></div>
<div class="t" style="left:648px;top:854.80px;font-size:15px;line-height:20px;font-weight:normal;color:#000;font-style:normal;width:300px;text-align:right;">4</div>
<div class="t" style="left:740px;top:854.80px;font-size:15px;line-height:20px;font-weight:normal;color:#000;font-style:normal;width:300px;text-align:right;">5</div>
<div class="t" style="left:832px;top:854.80px;font-size:15px;line-height:20px;font-weight:normal;color:#000;font-style:normal;width:300px;text-align:right;">4</div>
<div class="t" style="left:924px;top:854.80px;font-size:15px;line-height:20px;font-weight:normal;color:#000;font-style:normal;width:300px;text-align:right;">4</div>
<div class="t" style="left:1016px;top:854.80px;font-size:15px;line-height:20px;font-weight:normal;color:#000;font-style:normal;width:300px;text-align:right;">5</div>
<div class="t" style="left:1108px;top:854.80px;font-size:15px;line-height:20px;font-weight:normal;color:#000;font-style:normal;width:300px;text-align:right;">5</div>
<div class="t" style="left:1200px;top:854.80px;font-size:15px;line-height:20px;font-weight:normal;color:#000;font-style:normal;width:300px;text-align:right;">6</div>
<div class="t" style="left:79px;top:876.80px;font-size:15px;line-height:20px;font-weight:normal;color:#000;font-style:normal;letter-spacing:-0.260px;">Personalentwicklung von Monat zu Monat</div>
<svg style="position:absolute;left:877px;top:878px" width="16" height="16"><defs><linearGradient id="g458" x1="0" y1="0" x2="0" y2="1"><stop offset="0" stop-color="#72cf8a"/><stop offset="1" stop-color="#47a85c"/></linearGradient></defs><path d="M7.5 0.5 L14.5 7.5 L10.5 7.5 L10.5 15.5 L4.5 15.5 L4.5 7.5 L0.5 7.5 Z" fill="url(#g458)" stroke="#1f5a2c" stroke-width="1"/></svg>
<div class="t" style="left:664.5px;top:876.80px;font-size:15px;line-height:20px;font-weight:normal;color:#a8a8a8;font-style:normal;width:300px;text-align:right;">4</div>
<svg style="position:absolute;left:969px;top:878px" width="16" height="16"><defs><linearGradient id="g460" x1="0" y1="0" x2="0" y2="1"><stop offset="0" stop-color="#72cf8a"/><stop offset="1" stop-color="#47a85c"/></linearGradient></defs><path d="M7.5 0.5 L14.5 7.5 L10.5 7.5 L10.5 15.5 L4.5 15.5 L4.5 7.5 L0.5 7.5 Z" fill="url(#g460)" stroke="#1f5a2c" stroke-width="1"/></svg>
<svg style="position:absolute;left:1048.96px;top:879px" width="10" height="16"><path d="M763 0L583 0L583 1147Q518 1085 412 1023Q306 961 222 930L222 1104Q373 1175 486 1276Q599 1377 646 1472L763 1472Z" fill="#a8a8a8" transform="translate(0,13) scale(0.007324,-0.007324)"/></svg>
<svg style="position:absolute;left:1061px;top:878px" width="16" height="16"><defs><linearGradient id="g462" x1="0" y1="0" x2="0" y2="1"><stop offset="0" stop-color="#f59a9a"/><stop offset="1" stop-color="#e05050"/></linearGradient></defs><path d="M7.5 15.5 L14.5 8.5 L10.5 8.5 L10.5 0.5 L4.5 0.5 L4.5 8.5 L0.5 8.5 Z" fill="url(#g462)" stroke="#a02828" stroke-width="1"/></svg>
<svg style="position:absolute;left:1140.96px;top:879px" width="10" height="16"><path d="M763 0L583 0L583 1147Q518 1085 412 1023Q306 961 222 930L222 1104Q373 1175 486 1276Q599 1377 646 1472L763 1472Z" fill="#a8a8a8" transform="translate(0,13) scale(0.007324,-0.007324)"/></svg>
<div class="t" style="left:840.95771484375px;top:876.80px;font-size:15px;line-height:20px;font-weight:normal;color:#a8a8a8;font-style:normal;width:300px;text-align:right;">-</div>
<svg style="position:absolute;left:1153px;top:878px" width="16" height="16"><defs><linearGradient id="g465" x1="0" y1="0" x2="0" y2="1"><stop offset="0" stop-color="#ffe58a"/><stop offset="1" stop-color="#ffc840"/></linearGradient></defs><path d="M15.5 7.5 L8.5 0.5 L8.5 4.5 L0.5 4.5 L0.5 10.5 L8.5 10.5 L8.5 14.5 Z" fill="url(#g465)" stroke="#d09020" stroke-width="1"/></svg>
<svg style="position:absolute;left:1245px;top:878px" width="16" height="16"><defs><linearGradient id="g466" x1="0" y1="0" x2="0" y2="1"><stop offset="0" stop-color="#72cf8a"/><stop offset="1" stop-color="#47a85c"/></linearGradient></defs><path d="M7.5 0.5 L14.5 7.5 L10.5 7.5 L10.5 15.5 L4.5 15.5 L4.5 7.5 L0.5 7.5 Z" fill="url(#g466)" stroke="#1f5a2c" stroke-width="1"/></svg>
<svg style="position:absolute;left:1324.96px;top:879px" width="10" height="16"><path d="M763 0L583 0L583 1147Q518 1085 412 1023Q306 961 222 930L222 1104Q373 1175 486 1276Q599 1377 646 1472L763 1472Z" fill="#a8a8a8" transform="translate(0,13) scale(0.007324,-0.007324)"/></svg>
<svg style="position:absolute;left:1337px;top:878px" width="16" height="16"><defs><linearGradient id="g468" x1="0" y1="0" x2="0" y2="1"><stop offset="0" stop-color="#ffe58a"/><stop offset="1" stop-color="#ffc840"/></linearGradient></defs><path d="M15.5 7.5 L8.5 0.5 L8.5 4.5 L0.5 4.5 L0.5 10.5 L8.5 10.5 L8.5 14.5 Z" fill="url(#g468)" stroke="#d09020" stroke-width="1"/></svg>
<svg style="position:absolute;left:1429px;top:878px" width="16" height="16"><defs><linearGradient id="g469" x1="0" y1="0" x2="0" y2="1"><stop offset="0" stop-color="#72cf8a"/><stop offset="1" stop-color="#47a85c"/></linearGradient></defs><path d="M7.5 0.5 L14.5 7.5 L10.5 7.5 L10.5 15.5 L4.5 15.5 L4.5 7.5 L0.5 7.5 Z" fill="url(#g469)" stroke="#1f5a2c" stroke-width="1"/></svg>
<svg style="position:absolute;left:1508.96px;top:879px" width="10" height="16"><path d="M763 0L583 0L583 1147Q518 1085 412 1023Q306 961 222 930L222 1104Q373 1175 486 1276Q599 1377 646 1472L763 1472Z" fill="#a8a8a8" transform="translate(0,13) scale(0.007324,-0.007324)"/></svg>
</body></html>
